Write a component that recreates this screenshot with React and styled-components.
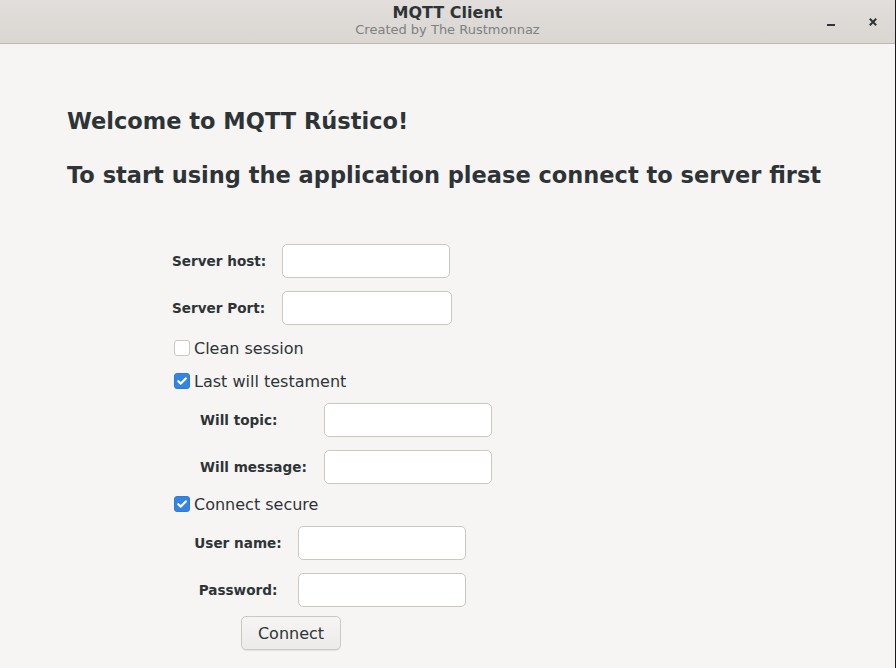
import React from "react"
import styled, { createGlobalStyle } from "styled-components"

const GlobalStyle = createGlobalStyle`
  html, body {
    margin: 0;
    padding: 0;
    background: #f6f5f4;
  }
  body {
    font-family: "DejaVu Sans", "Liberation Sans", sans-serif;
    color: #2e3436;
  }
`

const Window = styled.div`
  width: 896px;
  height: 668px;
  box-sizing: border-box;
  border-right: 1px solid #1b1b1b;
  background: #f6f5f4;
  overflow: hidden;
  display: flex;
  flex-direction: column;
`

const TitleBar = styled.header`
  height: 44px;
  flex: none;
  box-sizing: border-box;
  padding-top: 3px;
  background: linear-gradient(#e1dedb, #dad6d2);
  border-bottom: 1px solid #bfb8b1;
  position: relative;
  display: flex;
  flex-direction: column;
  align-items: center;
`

const Title = styled.div`
  font-weight: bold;
  font-size: 16px;
  line-height: 19px;
  color: #2e3436;
`

const Subtitle = styled.div`
  font-size: 13px;
  line-height: 16px;
  color: #7d8081;
`

const Controls = styled.div`
  position: absolute;
  right: 10px;
  top: 0;
  height: 44px;
  display: flex;
  align-items: center;
  gap: 18px;
`

const ControlButton = styled.div`
  width: 24px;
  height: 24px;
  display: flex;
  align-items: center;
  justify-content: center;
`

const Content = styled.main`
  padding: 0 0 0 67px;
`

const Heading = styled.h1`
  margin: ${p => p.$top}px 0 0;
  font-size: 22.5px;
  line-height: 26px;
  font-weight: bold;
  color: #2e3436;
  white-space: nowrap;
`

const Form = styled.div`
  margin: 56px 0 0 105px;
  display: flex;
  flex-direction: column;
`

const Row = styled.div`
  display: flex;
  align-items: center;
  margin-top: ${p => p.$top || 0}px;
  margin-left: ${p => p.$indent || 0}px;
`

const Label = styled.label`
  width: ${p => p.$width}px;
  margin-right: ${p => p.$gap}px;
  text-align: ${p => p.$align || "left"};
  font-size: 13.6px;
  font-weight: bold;
  color: #2e3436;
  white-space: nowrap;
`

const Input = styled.input`
  box-sizing: border-box;
  width: ${p => p.$width || 168}px;
  height: 34px;
  border: 1px solid #cdc7c2;
  border-radius: 5px;
  background: #ffffff;
  padding: 0 8px;
  font-family: inherit;
  font-size: 16px;
  outline: none;
`

const CheckRow = styled.label`
  display: flex;
  align-items: center;
  height: 20px;
  margin-top: ${p => p.$top}px;
  margin-left: 2px;
  font-size: 16px;
  color: #2e3436;
`

const Box = styled.span`
  box-sizing: border-box;
  width: 16px;
  height: 16px;
  margin-right: 4px;
  border-radius: 3px;
  border: 1px solid ${p => (p.$checked ? "#2f7bd8" : "#cdc7c2")};
  background: ${p => (p.$checked ? "#3584e4" : "#ffffff")};
  display: flex;
  align-items: center;
  justify-content: center;
`

const Button = styled.button`
  box-sizing: border-box;
  width: 100px;
  height: 34px;
  margin: 9px 0 0 69px;
  border: 1px solid #cdc7c2;
  border-radius: 5px;
  background: linear-gradient(#f6f5f4, #edebe9);
  box-shadow: 0 1px 0 rgba(0, 0, 0, 0.07);
  font-family: inherit;
  font-size: 16px;
  color: #2e3436;
`

const Check = ({ checked, label, top }) => (
  <CheckRow $top={top}>
    <Box $checked={checked}>
      {checked && (
        <svg width="12" height="12" viewBox="0 0 12 12">
          <path d="M2.3 6.2 L4.8 8.6 L9.8 3.4" fill="none" stroke="#fff" strokeWidth="2.2" strokeLinecap="round" strokeLinejoin="round" />
        </svg>
      )}
    </Box>
    {label}
  </CheckRow>
)

const App = () => (
  <Window>
    <GlobalStyle />
    <TitleBar>
      <Title>MQTT Client</Title>
      <Subtitle>Created by The Rustmonnaz</Subtitle>
      <Controls>
        <ControlButton>
          <svg width="16" height="16" viewBox="0 0 16 16">
            <rect x="4" y="10" width="8" height="2" fill="#2e3436" />
          </svg>
        </ControlButton>
        <ControlButton>
          <svg width="16" height="16" viewBox="0 0 16 16">
            <path d="M4.8 4.8 L11.2 11.2 M11.2 4.8 L4.8 11.2" stroke="#2e3436" strokeWidth="2" />
          </svg>
        </ControlButton>
      </Controls>
    </TitleBar>

    <Content>
      <Heading $top={64}>Welcome to MQTT Rústico!</Heading>
      <Heading $top={28}>To start using the application please connect to server first</Heading>

      <Form>
        <Row>
          <Label $width={93} $gap={17}>Server host:</Label>
          <Input $width={168} />
        </Row>
        <Row $top={13}>
          <Label $width={93} $gap={17}>Server Port:</Label>
          <Input $width={170} />
        </Row>

        <Check label="Clean session" top={13} />
        <Check label="Last will testament" checked top={13} />

        <Row $top={12} $indent={28}>
          <Label $width={107} $gap={17}>Will topic:</Label>
          <Input />
        </Row>
        <Row $top={13} $indent={28}>
          <Label $width={107} $gap={17}>Will message:</Label>
          <Input />
        </Row>

        <Check label="Connect secure" checked top={10} />

        <Row $top={12} $indent={16}>
          <Label $width={100} $gap={10} $align="center">User name:</Label>
          <Input />
        </Row>
        <Row $top={13} $indent={16}>
          <Label $width={100} $gap={10} $align="center">Password:</Label>
          <Input />
        </Row>

        <div>
          <Button>Connect</Button>
        </div>
      </Form>
    </Content>
  </Window>
)

export default App
